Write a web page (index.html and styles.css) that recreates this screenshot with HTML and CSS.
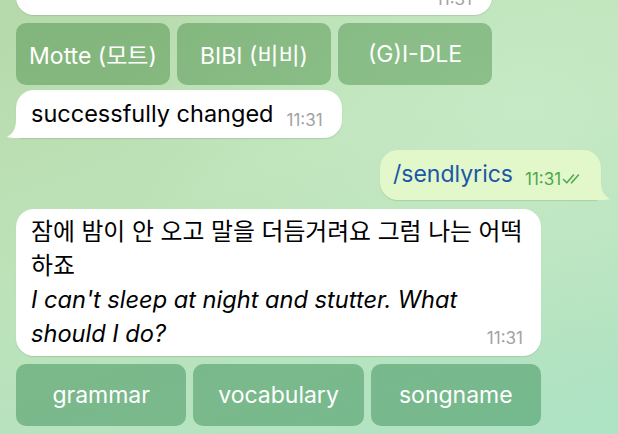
FILE: index.html
```html
<!DOCTYPE html>
<html lang="ko">
<head>
<meta charset="utf-8">
<title>Chat</title>
<link rel="stylesheet" href="styles.css">
</head>
<body>
<div class="chat">
  <div class="group g1">
    <div class="bubble in cut">
      <span class="time">11:31</span>
    </div>
    <div class="keyboard k1">
      <div class="kbtn">Motte (모트)</div>
      <div class="kbtn">BIBI (비비)</div>
      <div class="kbtn">(G)I-DLE</div>
    </div>
  </div>

  <div class="bubble in single">
    <span class="text">successfully changed</span>
    <span class="time">11:31</span>
    <svg class="tail tail-in" width="16" height="18" viewBox="0 0 16 18"><path d="M9 0 L16 0 L16 18 L6 18 C3.5 18 1.5 17.5 0 16.8 C5 14.5 9 10 9 0 Z" fill="#fff"/></svg>
  </div>

  <div class="bubble out">
    <span class="cmd">/sendlyrics</span>
    <span class="time out-time">11:31<svg class="checks" width="24" height="12" viewBox="0 0 24 12"><path d="M1.5 6.5 L4.8 9.8 L11.5 2" fill="none" stroke="#52a84c" stroke-width="1.6" stroke-linecap="round" stroke-linejoin="round"/><path d="M9.5 9.8 L16.5 2" fill="none" stroke="#52a84c" stroke-width="1.6" stroke-linecap="round"/></svg></span>
    <svg class="tail tail-out" width="16" height="18" viewBox="0 0 16 18"><path d="M7 0 L0 0 L0 18 L10 18 C12.5 18 14.5 17.5 16 16.8 C11 14.5 7 10 7 0 Z" fill="#e2f8cb"/></svg>
  </div>

  <div class="group g2">
    <div class="bubble in big">
      <p class="ko">잠에 밤이 안 오고 말을 더듬거려요 그럼 나는 어떡<br>하죠</p>
      <p class="en">I can't sleep at night and stutter. What<br>should I do?<span class="time float-time">11:31</span></p>
    </div>
    <div class="keyboard k2">
      <div class="kbtn">grammar</div>
      <div class="kbtn">vocabulary</div>
      <div class="kbtn">songname</div>
    </div>
  </div>
</div>
</body>
</html>
```

FILE: styles.css
```css
html, body {
  margin: 0;
  padding: 0;
  height: 100%;
  overflow: hidden;
}

body {
  font-family: Inter, "Noto Sans CJK KR", sans-serif;
  background:
    radial-gradient(ellipse at 85% 25%, rgba(200, 236, 200, 0.8) 0%, rgba(200, 236, 200, 0) 55%),
    linear-gradient(160deg, #b6d9ab 0%, #bee2b8 40%, #b6e3c0 75%, #ade3c4 100%);
}

.chat {
  display: flex;
  flex-direction: column;
  align-items: flex-start;
  padding-left: 16px;
}

.group {
  display: flex;
  flex-direction: column;
}

.g1 {
  width: 476px;
  margin-top: -25px;
}

.g2 {
  width: 525px;
  margin-top: 9px;
}

.bubble {
  position: relative;
  background: #fff;
  border-radius: 18px;
  box-shadow: 0 1px 1px rgba(60, 110, 60, 0.18);
  box-sizing: border-box;
}

.time {
  font-family: Inter, sans-serif;
  font-size: 17px;
  line-height: 18px;
  color: #a2a2a2;
  white-space: nowrap;
}

.cut {
  height: 40px;
  display: flex;
  justify-content: flex-end;
  align-items: flex-end;
  padding: 0 20px 7px 0;
}

.keyboard {
  display: grid;
  grid-template-columns: repeat(3, 1fr);
  gap: 7px;
  margin-top: 8px;
}

.kbtn {
  height: 62px;
  border-radius: 10px;
  display: flex;
  align-items: center;
  justify-content: center;
  color: #fff;
  font-size: 23px;
}

.k1 .kbtn {
  background: rgba(30, 112, 30, 0.34);
}

.k2 .kbtn {
  background: rgba(30, 122, 62, 0.4);
}

.single {
  margin-top: 5px;
  height: 48px;
  width: 326px;
  display: flex;
  align-items: flex-end;
  padding: 0 0 10px 15px;
  border-bottom-left-radius: 6px;
}

.single .text {
  font-size: 23.5px;
  line-height: 28px;
  color: #000;
}

.single .time {
  margin-left: 13px;
  margin-bottom: -1px;
}

.tail {
  position: absolute;
  bottom: 0;
}

.tail-in {
  left: -9px;
}

.tail-out {
  right: -9px;
}

.out {
  align-self: flex-end;
  margin-right: 17px;
  margin-top: 12px;
  height: 50px;
  width: 221px;
  background: #e2f8cb;
  display: flex;
  align-items: flex-end;
  padding: 0 0 11px 13px;
  border-bottom-right-radius: 6px;
}

.cmd {
  font-size: 23px;
  line-height: 30px;
  color: #1c56a6;
}

.out-time {
  color: #4fa64a;
  margin-left: 12px;
  margin-bottom: 1px;
  display: inline-flex;
  align-items: center;
}

.checks {
  margin-left: 1px;
}

.big {
  padding: 6px 16px 5px 15px;
}

.big p {
  margin: 0;
  line-height: 34px;
  color: #000;
}

.ko {
  font-size: 23.8px;
}

.en {
  font-size: 23.6px;
  font-style: italic;
}

.float-time {
  float: right;
  margin-top: 12px;
  margin-right: 2px;
  font-style: normal;
}
```
